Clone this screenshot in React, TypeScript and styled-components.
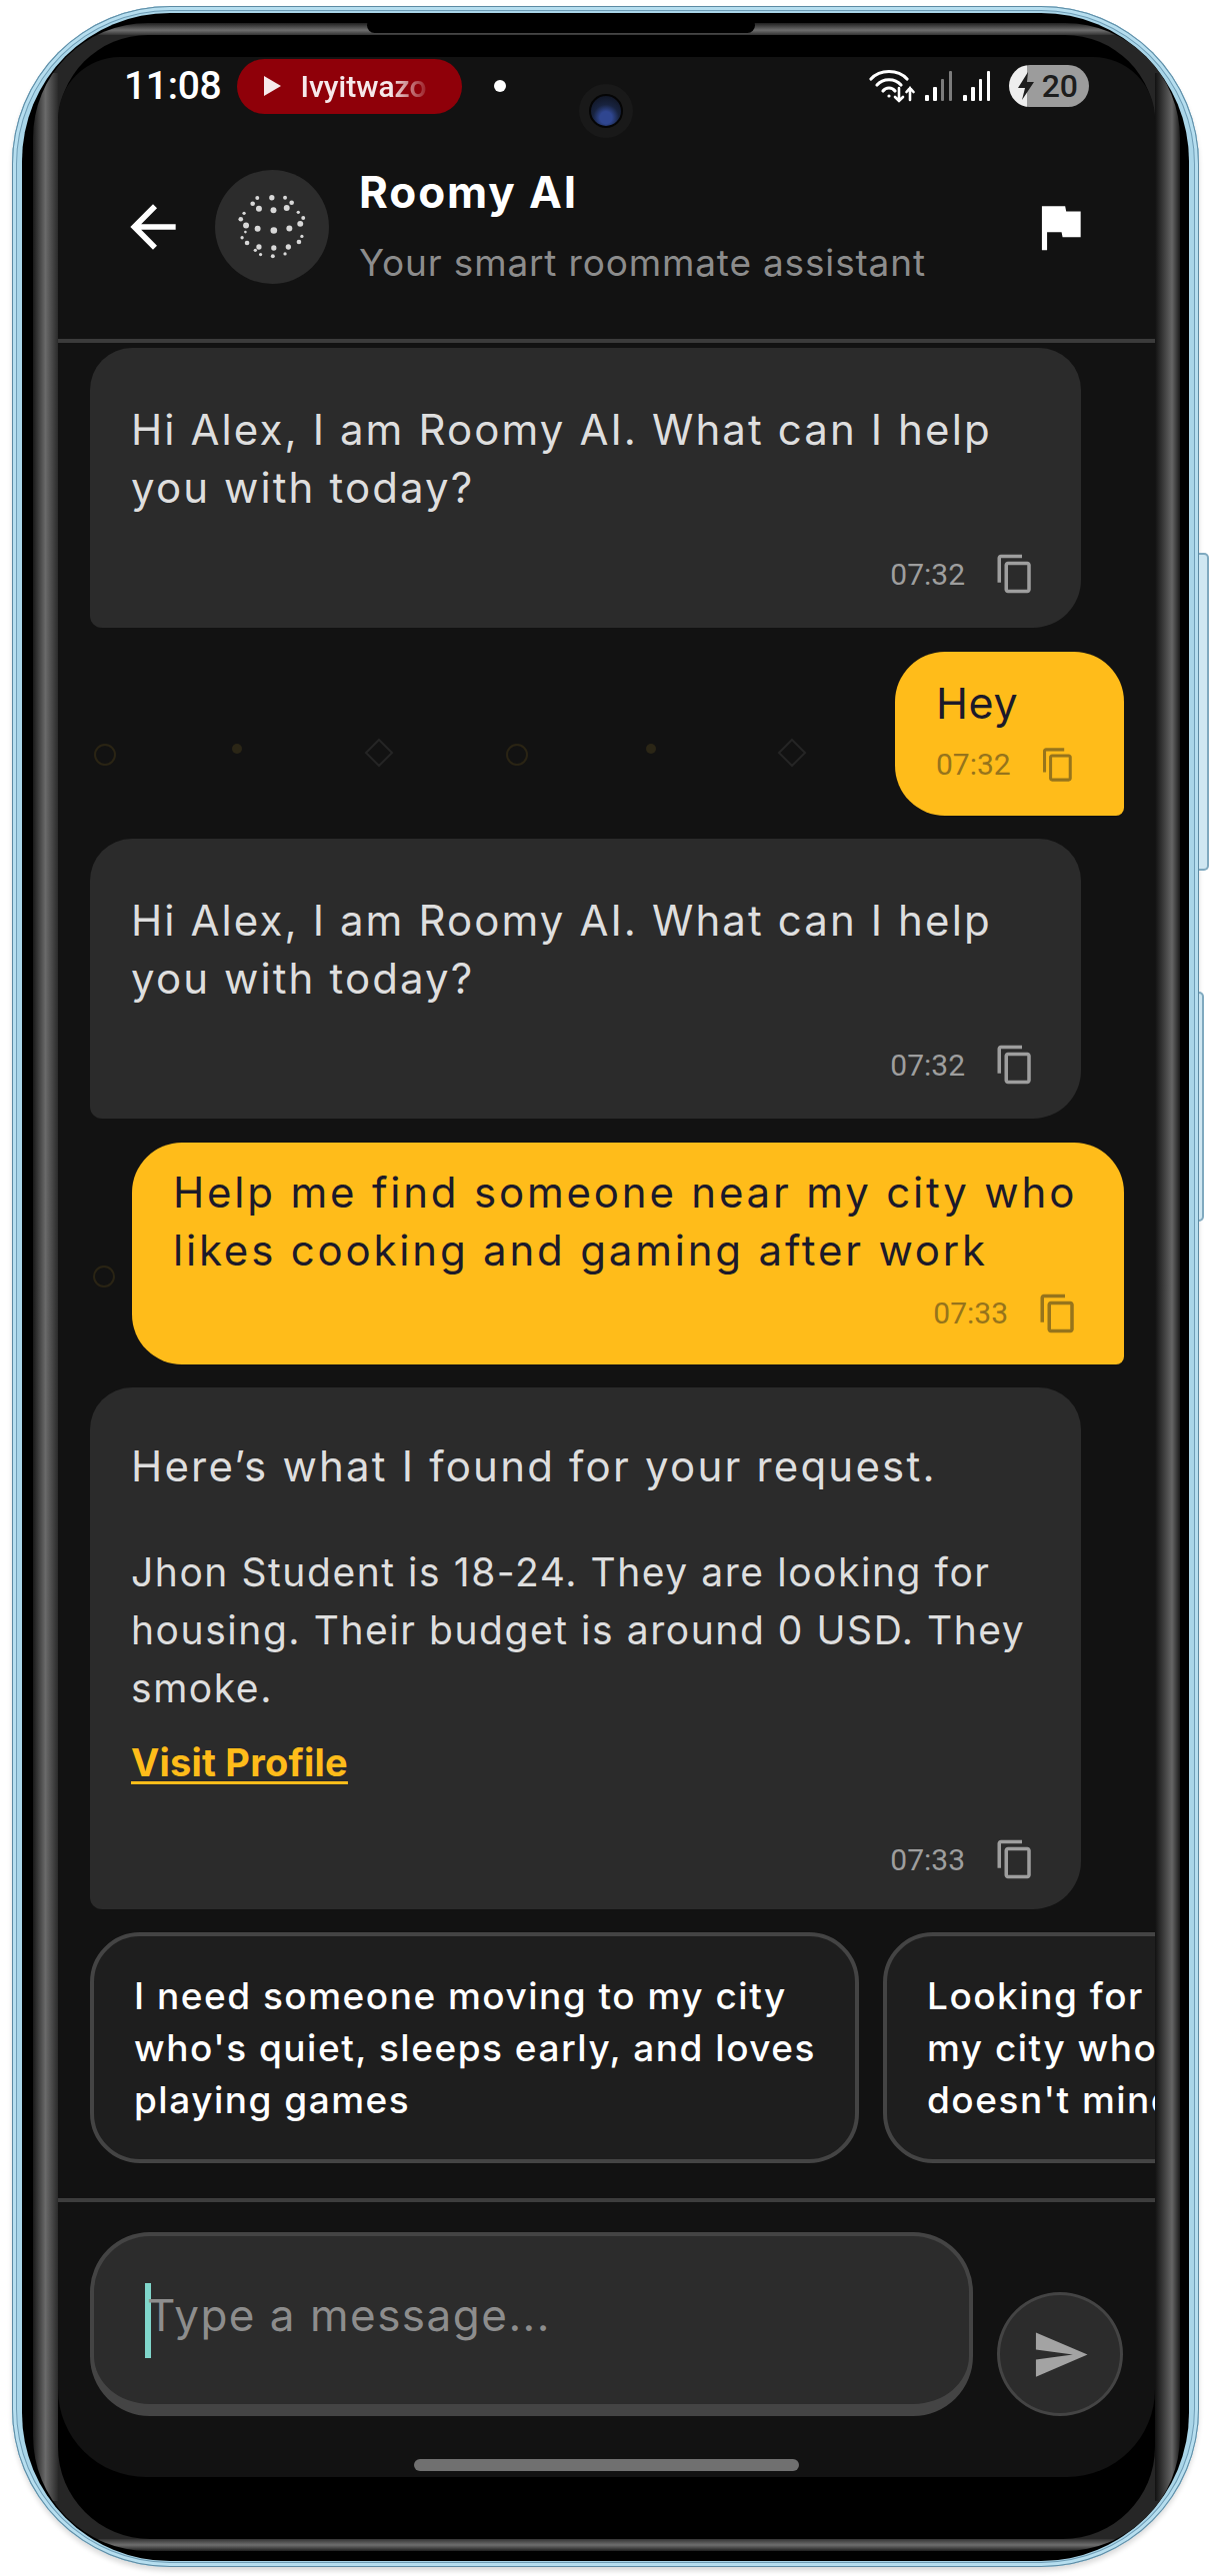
import React from 'react';
import styled, { createGlobalStyle } from 'styled-components';
import { MdArrowBack, MdContentCopy, MdFlag, MdSend } from 'react-icons/md';

const GlobalStyle = createGlobalStyle`
  * { box-sizing: border-box; }
  html, body { margin: 0; padding: 0; background: #fff; overflow: hidden; }
  body { font-family: "Inter", "Liberation Sans", sans-serif; }
`;

const Page = styled.div`
  width: 1219px;
  height: 2577px;
  padding: 6px 0 0 12px;
`;

const Shell = styled.div`
  position: relative;
  width: 1187px;
  height: 2562px;
  padding: 7px 10px 6px;
  border-radius: 158px;
  background: #a9d5e8;
  box-shadow:
    inset 0 0 0 1px #5c8aa3,
    inset 0 0 0 4px #b6deef,
    inset 0 0 0 5px #6f9db6,
    0 4px 5px rgba(0, 0, 0, 0.14);
`;

const SideButton = styled.div<{ $top: number; $height: number; $width: number }>`
  position: absolute;
  top: ${({ $top }) => $top}px;
  right: -${({ $width }) => $width}px;
  width: ${({ $width }) => $width}px;
  height: ${({ $height }) => $height}px;
  background: #cfe7f2;
  border: 2px solid #7fa9bf;
  border-left: none;
  border-radius: 0 5px 5px 0;
`;

const Bezel = styled.div`
  height: 100%;
  padding: 10px 9px 10px 11px;
  background: #000;
  border-radius: 148px;
`;

const Rim = styled.div`
  position: relative;
  height: 100%;
  padding: 12px 25px;
  border-radius: 115px;
  background-color: #262626;
  background-repeat: no-repeat;
  background-image:
    linear-gradient(180deg, #1f1f1f, #6e6e6e 60%, #333),
    linear-gradient(180deg, #333, #6e6e6e 50%, #1f1f1f),
    linear-gradient(90deg, #1a1a1a, #6a6a6a 50%, #2a2a2a),
    linear-gradient(90deg, #111, #666 68%, #1a1a1a);
  background-size:
    calc(100% - 120px) 12px,
    calc(100% - 120px) 12px,
    25px calc(100% - 100px),
    25px calc(100% - 100px);
  background-position: center top, center bottom, left center, right center;
`;

const Speaker = styled.div`
  position: absolute;
  top: -5px;
  left: 334px;
  width: 388px;
  height: 15px;
  background: #000;
  border-radius: 8px;
`;

const Glass = styled.div`
  height: 100%;
  padding: 22px 0 62px;
  background: #000;
  border-radius: 90px 90px 92px 92px;
`;

const Screen = styled.div`
  position: relative;
  display: flex;
  flex-direction: column;
  height: 100%;
  overflow: hidden;
  background: #121212;
  border-radius: 62px 62px 88px 88px;
`;

const StatusBar = styled.div`
  display: flex;
  align-items: center;
  justify-content: space-between;
  height: 58px;
  padding: 0 66px;
  color: #fff;
  font-family: "Roboto", sans-serif;
`;

const StatusGroup = styled.div<{ $gap: number }>`
  display: flex;
  align-items: center;
  gap: ${({ $gap }) => $gap}px;
`;

const Time = styled.span`
  font-size: 39px;
  font-weight: 500;
  letter-spacing: -0.3px;
`;

const MediaPill = styled.div`
  display: flex;
  align-items: center;
  gap: 19px;
  width: 225px;
  height: 55px;
  padding-left: 27px;
  background: #8f0009;
  border-radius: 28px;
`;

const PlayMark = styled.span`
  width: 0;
  height: 0;
  border-left: 17px solid #f6e9eb;
  border-top: 10px solid transparent;
  border-bottom: 10px solid transparent;
`;

const MediaTitle = styled.span`
  font-size: 30px;
  font-weight: 500;
  color: #f6e9eb;
  -webkit-mask-image: linear-gradient(90deg, #000 72%, rgba(0, 0, 0, 0.15));
  mask-image: linear-gradient(90deg, #000 72%, rgba(0, 0, 0, 0.15));
`;

const StatusDot = styled.span`
  width: 12px;
  height: 12px;
  margin-left: 16px;
  background: #fff;
  border-radius: 50%;
`;

const Battery = styled.div`
  position: relative;
  display: flex;
  align-items: center;
  justify-content: flex-end;
  width: 80px;
  height: 42px;
  padding-right: 11px;
  margin-left: 8px;
  border-radius: 21px;
  background: linear-gradient(90deg, #eee 18px, #9c9c9c 18px);
  color: #1d1d1d;
  font-size: 32px;
  font-weight: 500;
`;

const BatteryBolt = styled.svg`
  position: absolute;
  left: 7px;
  top: 7px;
  width: 20px;
  height: 28px;
`;

const Camera = styled.div`
  position: absolute;
  top: 27px;
  left: 521px;
  display: grid;
  place-items: center;
  width: 54px;
  height: 54px;
  background: #191919;
  border-radius: 50%;
`;

const CameraLens = styled.div`
  width: 34px;
  height: 34px;
  background: radial-gradient(circle at 50% 72%, #2f4690 0 6px, #18233f 13px, #0d1018 100%);
  border: 2px solid #050505;
  border-radius: 50%;
`;

const Header = styled.header`
  display: flex;
  align-items: center;
  height: 228px;
  padding: 0 64px 0 61px;
  border-bottom: 4px solid #3b3b3b;
  color: #fff;
`;

const Avatar = styled.div`
  display: grid;
  place-items: center;
  flex-shrink: 0;
  width: 114px;
  height: 114px;
  margin: 0 30px 0 28px;
  background: #2c2c2c;
  border-radius: 50%;
`;

const HeaderText = styled.div`
  display: flex;
  flex-direction: column;
  flex: 1;
  gap: 23px;
`;

const Title = styled.div`
  font-size: 44px;
  line-height: 50px;
  font-weight: 700;
  letter-spacing: 1.9px;
  margin-top: -2px;
`;

const Subtitle = styled.div`
  font-size: 37px;
  line-height: 46px;
  color: #8c8c8c;
  letter-spacing: 0.83px;
`;

const Chat = styled.main`
  position: relative;
  display: flex;
  flex-direction: column;
  gap: 23.5px;
  padding: 5px 31px 0 32px;
`;

const Doodles = styled.svg`
  position: absolute;
  top: 0;
  left: 0;
  width: 100%;
  height: 100%;
`;

const Bubble = styled.div<{ $mine?: boolean; $width: number; $top: number; $bottom: number; $right?: number }>`
  position: relative;
  display: flex;
  flex-direction: column;
  align-self: ${({ $mine }) => ($mine ? 'flex-end' : 'flex-start')};
  width: ${({ $width }) => $width}px;
  padding: ${({ $top, $bottom, $right }) => `${$top}px ${$right ?? 45}px ${$bottom}px 41px`};
  background: ${({ $mine }) => ($mine ? '#ffbc1a' : '#2b2b2b')};
  color: ${({ $mine }) => ($mine ? '#1c1a2a' : '#dedede')};
  border-radius: ${({ $mine }) => ($mine ? '50px 50px 8px 50px' : '42px 42px 48px 12px')};
`;

const Message = styled.p<{ $size?: number; $spacing?: number; $gap?: number }>`
  margin: 0 0 ${({ $gap }) => $gap ?? 0}px;
  font-size: ${({ $size }) => $size ?? 42}px;
  line-height: 58px;
  letter-spacing: ${({ $spacing }) => $spacing ?? 2.1}px;
  white-space: nowrap;
`;

const ProfileLink = styled.a`
  margin-top: 20px;
  color: #ffbc1a;
  font-size: 38px;
  line-height: 50px;
  font-weight: 700;
  letter-spacing: 0.2px;
  text-decoration: underline;
  text-underline-offset: 5px;
`;

const Meta = styled.div<{ $mine?: boolean; $top: number }>`
  display: flex;
  align-items: center;
  justify-content: flex-end;
  gap: 29px;
  margin-top: ${({ $top }) => $top}px;
  font-family: "Roboto", sans-serif;
  font-size: 30px;
  color: ${({ $mine }) => ($mine ? '#96741c' : '#9e9e9e')};
`;

const Suggestions = styled.div`
  display: flex;
  gap: 24px;
  margin-top: 23px;
  padding-left: 32px;
  overflow: hidden;
`;

const SuggestionCard = styled.button`
  flex: 0 0 769px;
  height: 231px;
  padding: 0 0 0 40px;
  background: #1e1e1e;
  border: 4px solid #444;
  border-radius: 50px;
  color: #fff;
  font-family: inherit;
  font-size: 37px;
  line-height: 52px;
  font-weight: 500;
  letter-spacing: 1.5px;
  text-align: left;
  white-space: nowrap;
`;

const Composer = styled.div`
  display: flex;
  align-items: flex-end;
  gap: 24px;
  margin-top: 35px;
  padding: 30px 32px 0;
  border-top: 4px solid #3d3d3d;
`;

const InputBox = styled.div`
  display: flex;
  align-items: center;
  width: 883px;
  height: 184px;
  padding-left: 51px;
  background: #2c2c2c;
  border: 4px solid #444;
  border-bottom-width: 12px;
  border-radius: 60px;
`;

const Caret = styled.span`
  width: 6px;
  height: 75px;
  background: #80d6cb;
`;

const Placeholder = styled.span`
  margin: 0 0 10px -4px;
  color: #8d8d8d;
  font-size: 44px;
  letter-spacing: 1.5px;
`;

const SendButton = styled.button`
  display: grid;
  place-items: center;
  width: 126px;
  height: 124px;
  padding: 0;
  background: #2c2c2c;
  border: 3px solid #444;
  border-radius: 50%;
  color: #a3a3a3;
`;

const HomeBar = styled.div`
  align-self: center;
  width: 385px;
  height: 12px;
  margin-top: 43px;
  background: #707070;
  border-radius: 6px;
`;

const avatarDots: [number, number, number][] = [
  [128, 92, 6], [172, 91, 8], [212, 91, 6], [114, 109, 7], [232, 106, 7],
  [133, 124, 9], [177, 129, 9], [217, 122, 9], [88, 138, 5], [252, 135, 5],
  [78, 156, 7], [267, 152, 6], [94, 175, 9], [258, 170, 9], [129, 185, 9],
  [178, 190, 10], [225, 184, 9], [92, 195, 4], [82, 212, 5], [263, 208, 5],
  [97, 228, 7], [254, 225, 7], [133, 240, 8], [178, 243, 8], [222, 240, 8],
  [122, 250, 5], [138, 263, 5], [175, 268, 6], [212, 261, 5],
];

const AvatarDots = () => (
  <svg width="114" height="114" viewBox="0 0 345 345">
    {avatarDots.map(([x, y, r]) => (
      <circle key={`${x}-${y}`} cx={x} cy={y - 7} r={r} fill="#d8d8d8" />
    ))}
  </svg>
);

const WifiIcon = () => (
  <svg width="46" height="36" viewBox="0 0 46 36" fill="none" stroke="#fff" strokeWidth="3.2" strokeLinecap="round">
    <path d="M2 11 C11 1 29 1 38 11" />
    <path d="M8 17 C14 10 26 10 32 17" />
    <path d="M14 23 C17 19 23 19 26 23" />
    <circle cx="20" cy="28" r="1.6" fill="#fff" stroke="none" />
    <path d="M30 20 V33 M26 29 L30 33 L34 29" strokeWidth="2.6" />
    <path d="M41 32 V20 M37.5 24 L41 20 L44.5 24" strokeWidth="2.6" />
  </svg>
);

const SignalIcon = ({ faded }: { faded?: boolean }) => (
  <svg width="28" height="30" viewBox="0 0 28 30" fill="#fff">
    <rect x="0" y="24" width="4" height="6" rx="1" />
    <rect x="8" y="16" width="4" height="14" rx="1" />
    <rect x="16" y="8" width="3" height="22" rx="1" opacity={faded ? 0.45 : 1} />
    <rect x="24" y="0" width="3" height="30" rx="1" opacity={faded ? 0.45 : 1} />
  </svg>
);

const CopyIcon = () => <MdContentCopy size={42} />;

const doodles = (
  <Doodles>
    <ellipse cx="47" cy="412" rx="10" ry="10" fill="none" stroke="#2a2414" strokeWidth="2" />
    <circle cx="179" cy="406" r="5" fill="#2b2616" />
    <path d="M321 397 L334 410 L321 423 L308 410 Z" fill="none" stroke="#252525" strokeWidth="2" />
    <ellipse cx="459" cy="412" rx="10" ry="10" fill="none" stroke="#2a2414" strokeWidth="2" />
    <circle cx="593" cy="406" r="5" fill="#2b2616" />
    <path d="M734 397 L747 410 L734 423 L721 410 Z" fill="none" stroke="#252525" strokeWidth="2" />
    <ellipse cx="46" cy="934" rx="10" ry="10" fill="none" stroke="#2a2414" strokeWidth="2" />
  </Doodles>
);

const App = () => {
  return (
    <Page>
      <GlobalStyle />
      <Shell>
        <SideButton $top={547} $height={318} $width={10} />
        <SideButton $top={986} $height={230} $width={5} />
        <Bezel>
          <Rim>
            <Speaker />
            <Glass>
              <Screen>
                <StatusBar>
                  <StatusGroup $gap={16}>
                    <Time>11:08</Time>
                    <MediaPill>
                      <PlayMark />
                      <MediaTitle>Ivyitwazo</MediaTitle>
                    </MediaPill>
                    <StatusDot />
                  </StatusGroup>
                  <StatusGroup $gap={10}>
                    <WifiIcon />
                    <SignalIcon faded />
                    <SignalIcon />
                    <Battery>
                      <BatteryBolt viewBox="0 0 20 28">
                        <path d="M12 0 L2 16 H9 L6 28 L18 10 H11 Z" fill="#1d1d1d" />
                      </BatteryBolt>
                      20
                    </Battery>
                  </StatusGroup>
                </StatusBar>
                <Camera>
                  <CameraLens />
                </Camera>
                <Header>
                  <MdArrowBack size={68} />
                  <Avatar>
                    <AvatarDots />
                  </Avatar>
                  <HeaderText>
                    <Title>Roomy AI</Title>
                    <Subtitle>Your smart roommate assistant</Subtitle>
                  </HeaderText>
                  <MdFlag size={62} />
                </Header>
                <Chat>
                  {doodles}
                  <Bubble $width={991} $top={53} $bottom={33}>
                    <Message>
                      Hi Alex, I am Roomy AI. What can I help
                      <br />
                      you with today?
                    </Message>
                    <Meta $top={36}>
                      07:32
                      <CopyIcon />
                    </Meta>
                  </Bubble>
                  <Bubble $mine $width={229} $top={22} $bottom={30} $right={48}>
                    <Message $size={43} $spacing={0.6}>Hey</Message>
                    <Meta $mine $top={12}>
                      07:32
                      <CopyIcon />
                    </Meta>
                  </Bubble>
                  <Bubble $width={991} $top={53} $bottom={33}>
                    <Message>
                      Hi Alex, I am Roomy AI. What can I help
                      <br />
                      you with today?
                    </Message>
                    <Meta $top={36}>
                      07:32
                      <CopyIcon />
                    </Meta>
                  </Bubble>
                  <Bubble $mine $width={992} $top={21} $bottom={30}>
                    <Message $spacing={2.8}>
                      Help me find someone near my city who
                      <br />
                      likes cooking and gaming after work
                    </Message>
                    <Meta $mine $top={13}>
                      07:33
                      <CopyIcon />
                    </Meta>
                  </Bubble>
                  <Bubble $width={991} $top={50} $bottom={29}>
                    <Message $gap={48} $spacing={2.2}>Here’s what I found for your request.</Message>
                    <Message $size={39} $spacing={1.55}>
                      Jhon Student is 18-24. They are looking for
                      <br />
                      housing. Their budget is around 0 USD. They
                      <br />
                      smoke.
                    </Message>
                    <ProfileLink>Visit Profile</ProfileLink>
                    <Meta $top={51}>
                      07:33
                      <CopyIcon />
                    </Meta>
                  </Bubble>
                </Chat>
                <Suggestions>
                  <SuggestionCard>
                    I need someone moving to my city
                    <br />
                    who's quiet, sleeps early, and loves
                    <br />
                    playing games
                  </SuggestionCard>
                  <SuggestionCard>
                    Looking for a roommate in
                    <br />
                    my city who works late and
                    <br />
                    doesn't mind pets
                  </SuggestionCard>
                </Suggestions>
                <Composer>
                  <InputBox>
                    <Caret />
                    <Placeholder>Type a message...</Placeholder>
                  </InputBox>
                  <SendButton>
                    <MdSend size={59} />
                  </SendButton>
                </Composer>
                <HomeBar />
              </Screen>
            </Glass>
          </Rim>
        </Bezel>
      </Shell>
    </Page>
  );
};

export default App;
